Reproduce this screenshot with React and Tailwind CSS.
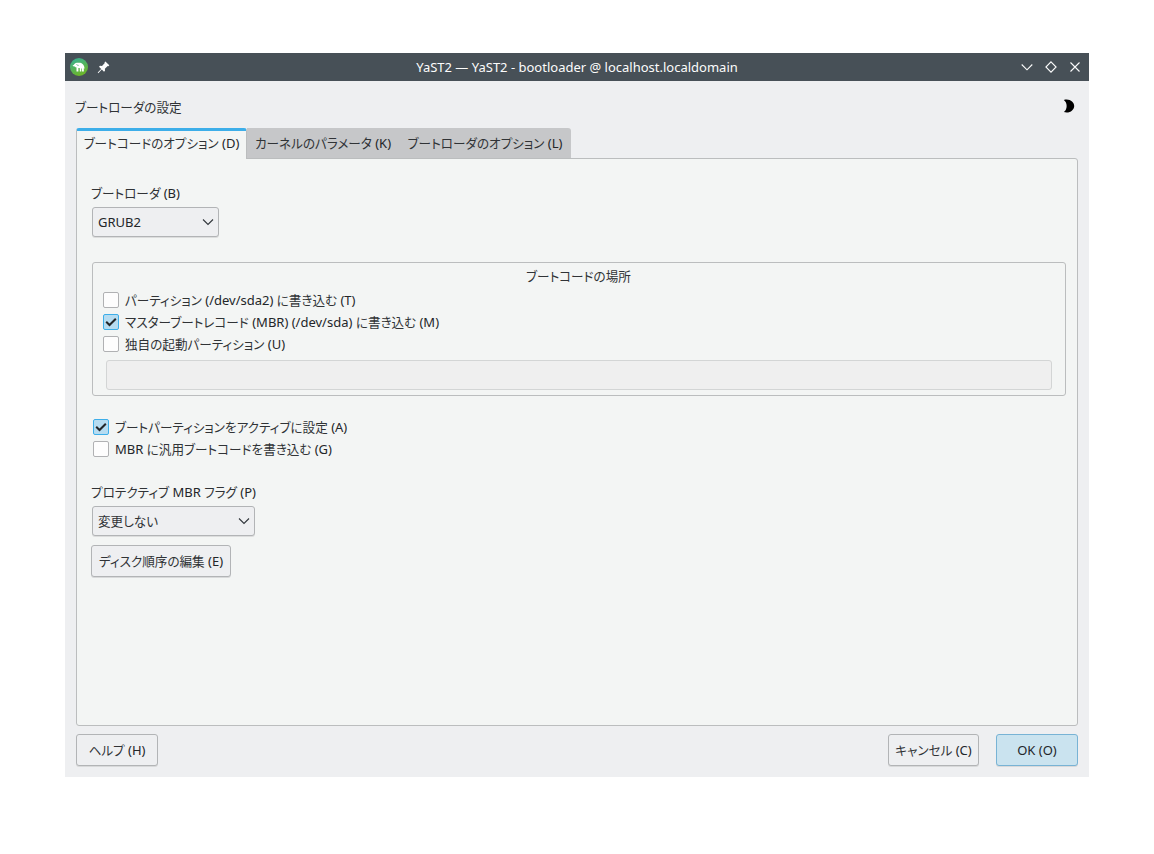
import React from "react";

const CJK = /([\u3040-\u30ff\u4e00-\u9fff]+)/;

function T({ children }) {
  return (
    <span>
      {children.split(CJK).map((part, i) =>
        CJK.test(part) ? (
          <span key={i} className="text-[12.6px] leading-none text-[#303336]">
            {part}
          </span>
        ) : (
          part
        ),
      )}
    </span>
  );
}

const Chevron = () => (
  <svg width="12" height="12" viewBox="0 0 12 12" fill="none" stroke="#31363b" strokeWidth="1.1">
    <path d="M1 3.5 6 8.5 11 3.5" />
  </svg>
);

function Check({ checked, children }) {
  return (
    <label className="flex h-[22px] items-center gap-[6px] whitespace-nowrap">
      <span
        className={
          checked
            ? "flex size-4 items-center justify-center rounded-[2px] border border-[#3daee9] bg-[#b6dcf1]"
            : "size-4 rounded-[2px] border border-[#b0b1b3] bg-[#fdfdfd]"
        }
      >
        {checked && (
          <svg width="12" height="12" viewBox="0 0 12 12" fill="none" stroke="#232629" strokeWidth="2">
            <path d="M1.2 5.8 4.5 9 10.8 2.8" />
          </svg>
        )}
      </span>
      <T>{children}</T>
    </label>
  );
}

function Combo({ className, children }) {
  return (
    <div
      className={`flex h-[30px] items-center justify-between rounded-[3px] border border-[#b2b4b6] bg-[#eeeff1] pr-1 pl-[5px] shadow-[0_1px_0_#dcdddd] ${className}`}
    >
      <T>{children}</T>
      <Chevron />
    </div>
  );
}

function Button({ className, children }) {
  return (
    <button
      className={`flex h-8 items-center justify-center rounded-[3px] border whitespace-nowrap shadow-[0_1px_0_#d8d9da] ${className}`}
    >
      <T>{children}</T>
    </button>
  );
}

export default function App() {
  return (
    <div className="h-[854px] w-[1154px] bg-white pt-[53px] pl-[65px] font-['Noto_Sans','Noto_Sans_CJK_JP',sans-serif] text-[13px] leading-[18px] text-[#232629] [font-feature-settings:'palt']">
      <div className="flex h-[724px] w-[1024px] flex-col bg-[#eeeff1]">
        <header className="flex h-7 items-center bg-[#475057] px-[5px] text-[#fcfcfc]">
          <div className="flex w-[80px] items-center gap-[9px]">
            <svg width="18" height="18" viewBox="0 0 18 18">
              <defs>
                <linearGradient id="badge" x1="0" y1="0" x2="0.4" y2="1">
                  <stop offset="0" stopColor="#35b09a" />
                  <stop offset="1" stopColor="#6bb52c" />
                </linearGradient>
              </defs>
              <circle cx="9" cy="9" r="9" fill="url(#badge)" />
              <path
                fill="#fff"
                d="M2.5 7.6C3.7 7.3 4.2 6.4 5 5.6 5.7 4.8 6.6 4.4 7.6 4.8c2.2-.2 4.2.1 5.5 1.6 1 1.1 1.4 2.6 1.4 4.4l-.7-.6V13.6h-1.9V10.4h-.7V13.6h-1.4V10.2C9.2 9.8 8.9 9.8 8.4 10.1V13.6H6.5V9.6C5.7 9.5 5.2 9.1 4.9 8.4 4.1 8.6 3.1 8.4 2.5 7.6Z"
              />
              <path d="M6.7 6C6.9 7.3 7.7 7.8 8.8 7.3" fill="none" stroke="#46ad72" strokeWidth=".6" />
            </svg>
            <svg width="13" height="13" viewBox="0 0 13 13">
              <path
                fill="#fcfcfc"
                d="M8.4 .4 12.3 4.3 11.4 5.2 10.7 5 7.9 7.8 8 9.8 7 10.8 4.8 8.6 1.3 12.2 0.7 11.6 4.2 8 2 5.8 3 4.8 5 4.9 7.8 2.1 7.5 1.3Z"
              />
            </svg>
          </div>
          <div className="flex-1 pl-[10px] text-center">YaST2 — YaST2 - bootloader @ localhost.localdomain</div>
          <div className="flex w-[90px] items-center justify-end gap-3 pr-[3px]">
            <svg width="12" height="12" viewBox="0 0 12 12" fill="none" stroke="#fcfcfc" strokeWidth="1.1">
              <path d="M.7 3.5 6 8.8 11.3 3.5" />
            </svg>
            <svg width="12" height="12" viewBox="0 0 12 12" fill="none" stroke="#fcfcfc" strokeWidth="1.1">
              <path d="M6 .9 11.1 6 6 11.1 .9 6Z" />
            </svg>
            <svg width="12" height="12" viewBox="0 0 12 12" fill="none" stroke="#fcfcfc" strokeWidth="1.1">
              <path d="M1.5 1.5 10.5 10.5M10.5 1.5 1.5 10.5" />
            </svg>
          </div>
        </header>

        <div className="flex h-[47px] items-center justify-between pr-[14px] pl-[10px]">
          <h1 className="pt-[5px]">
            <T>ブートローダの設定</T>
          </h1>
          <svg width="12" height="14" viewBox="0 0 12 14" className="mt-[3px]">
            <path d="M.8.9C6.5 -.8 11.2 2.8 11.2 7S6.5 14.8 .8 13.1C4.6 10.6 4.6 3.4 .8.9Z" />
          </svg>
        </div>

        <nav className="relative z-10 ml-[11px] flex h-[31px] whitespace-nowrap">
          <div className="flex w-[171px] justify-center rounded-t-[3px] border-t-[3px] border-r border-l border-t-[#3daee9] border-r-[#bbbdbe] border-l-[#bbbdbe] bg-[#f3f5f4] pt-[3px]">
            <T>ブートコードのオプション (D)</T>
          </div>
          <div className="flex h-[30px] w-[152px] justify-center bg-[#c6c7c9] pt-[6px]">
            <T>カーネルのパラメータ (K)</T>
          </div>
          <div className="flex h-[30px] w-[172px] justify-center rounded-tr-[3px] bg-[#c6c7c9] pt-[6px]">
            <T>ブートローダのオプション (L)</T>
          </div>
        </nav>

        <main className="mx-[11px] -mt-px flex h-[568px] flex-col rounded-b-[3px] rounded-tr-[3px] border border-[#bbbdbe] bg-[#f3f5f4] pt-[25px] pr-[11px] pl-[15px]">
          <div className="-ml-px h-[18px]">
            <T>ブートローダ (B)</T>
          </div>
          <Combo className="mt-[5px] w-[127px]">GRUB2</Combo>

          <section className="mt-[25px] h-[134px] rounded-[3px] border border-[#bbbdbe] pt-1 pr-[13px] pl-[10px]">
            <h2 className="mb-[4px] h-[18px] pl-[2px] text-center">
              <T>ブートコードの場所</T>
            </h2>
            <Check>パーティション (/dev/sda2) に書き込む (T)</Check>
            <Check checked>マスターブートレコード (MBR) (/dev/sda) に書き込む (M)</Check>
            <Check>独自の起動パーティション (U)</Check>
            <div className="mt-[5px] ml-[3px] h-[30px] rounded-[3px] border border-[#d3d5d5] bg-[#efefef]" />
          </section>

          <div className="mt-5 pl-px">
            <Check checked>ブートパーティションをアクティブに設定 (A)</Check>
            <Check>MBR に汎用ブートコードを書き込む (G)</Check>
          </div>

          <div className="mt-[23px] -ml-px h-[18px]">
            <T>プロテクティブ MBR フラグ (P)</T>
          </div>
          <Combo className="mt-[5px] w-[163px]">変更しない</Combo>
          <Button className="mt-[9px] -ml-px w-[140px] border-[#b2b4b6] bg-[#eeeff1]">ディスク順序の編集 (E)</Button>
        </main>

        <footer className="flex px-[11px] pt-2">
          <Button className="w-[82px] border-[#b2b4b6] bg-[#eeeff1]">ヘルプ (H)</Button>
          <Button className="mr-[17px] ml-auto w-[91px] border-[#b2b4b6] bg-[#eeeff1]">キャンセル (C)</Button>
          <Button className="w-[82px] border-[#78b3d5] bg-[#cae3ef]">OK (O)</Button>
        </footer>
      </div>
    </div>
  );
}
